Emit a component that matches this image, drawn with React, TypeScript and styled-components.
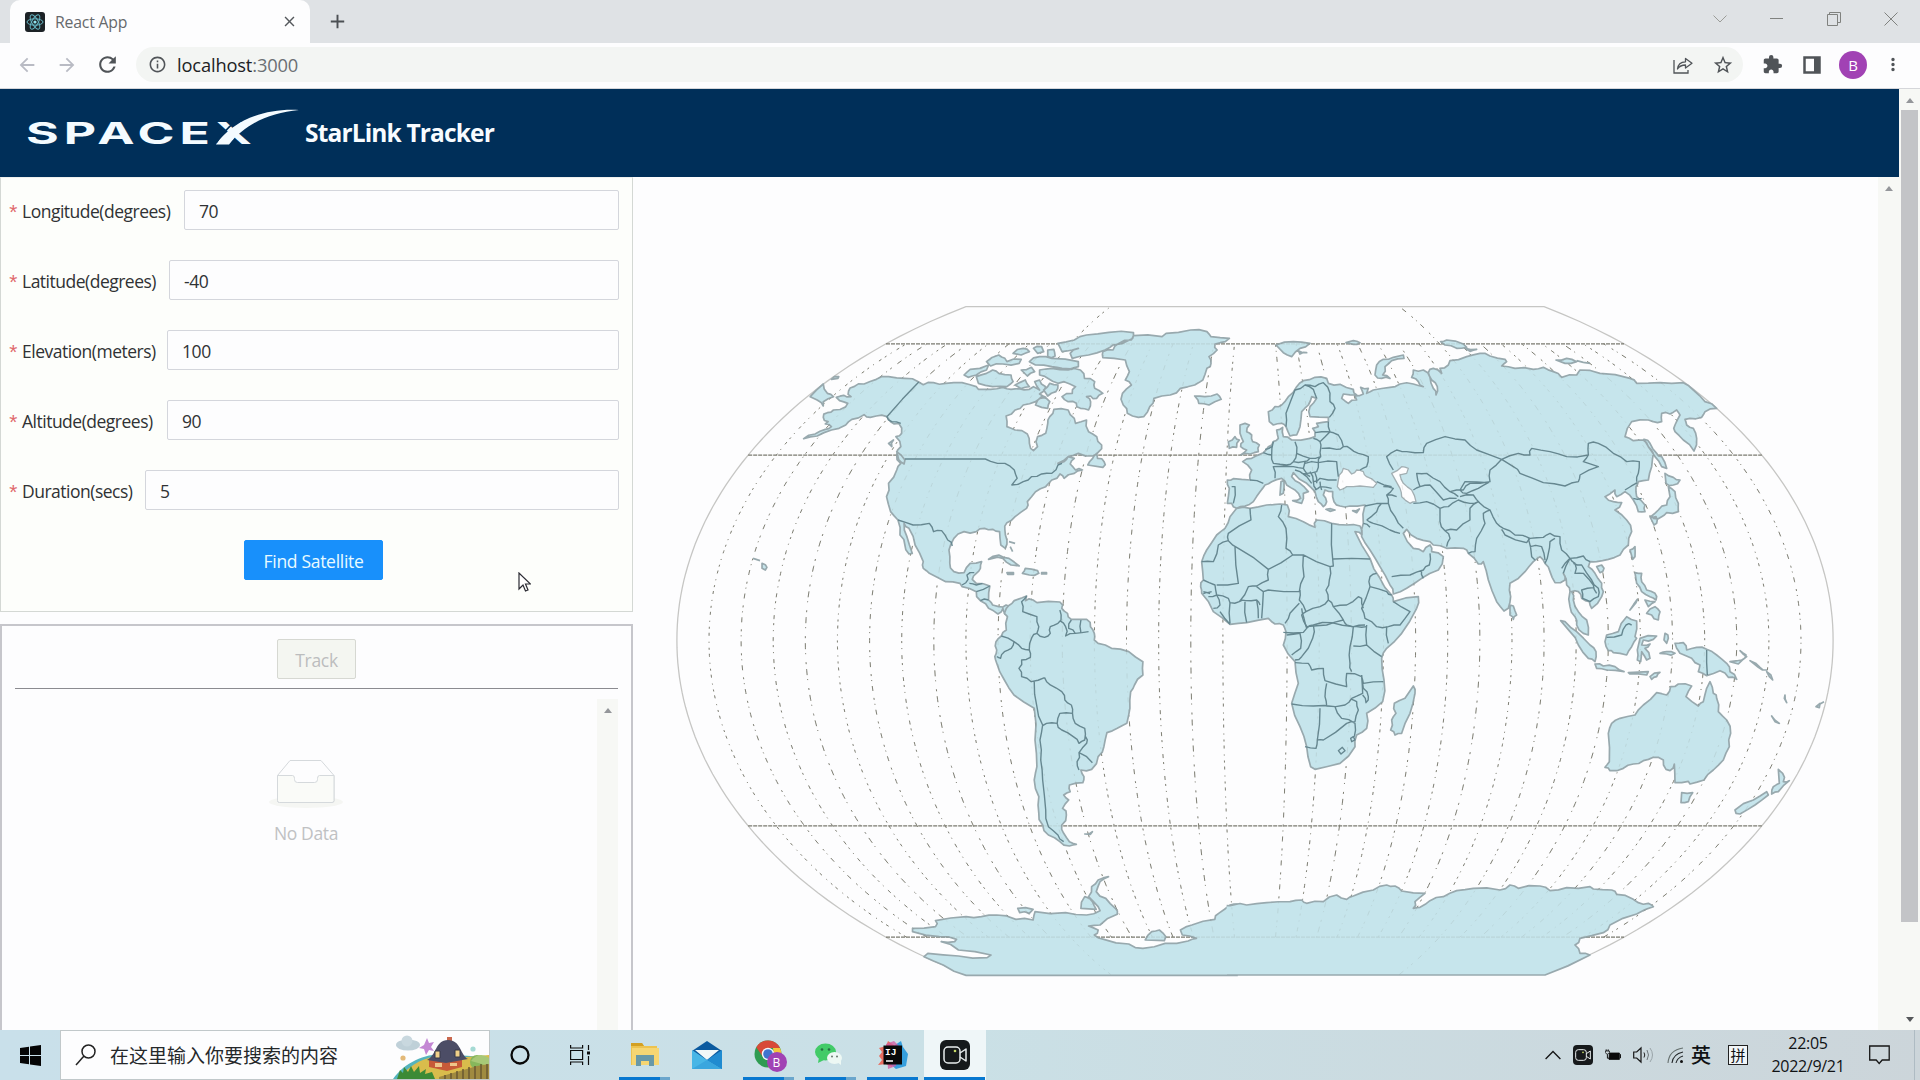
import React from "react";
import styled, { createGlobalStyle } from "styled-components";
import {
  MdArrowBack, MdArrowForward, MdRefresh, MdInfoOutline, MdStarBorder,
  MdExtension, MdMoreVert, MdClose, MdAdd,
} from "react-icons/md";

const GlobalStyle = createGlobalStyle`
  * { box-sizing: border-box; }
  body { margin: 0; overflow: hidden; background: #fdfdfe; }
`;

const ui = `"Open Sans", "Noto Sans", "Noto Sans CJK SC", sans-serif`;

const Screen = styled.div`
  width: 1920px; height: 1080px; display: flex; flex-direction: column;
  font-family: ${ui}; font-size: 17.5px; color: #303234; background: #fdfdfe;
  overflow: hidden; position: relative;
`;

/* ---------- browser chrome ---------- */
const TabStrip = styled.div`
  height: 43px; flex: none; display: flex; background: #dfe2e5; padding-left: 10px;
`;
const Tab = styled.div`
  width: 300px; height: 43px; background: #fdfdfe; border-radius: 10px 10px 0 0;
  display: flex; align-items: center; padding: 0 12px 0 15px;
`;
const Favicon = styled.svg`width: 20px; height: 20px; display: block;`;
const TabTitle = styled.span`
  flex: 1; padding-left: 10px; font-size: 15.8px; letter-spacing: -0.2px; color: #66696c;
`;
const NewTab = styled.div`
  width: 52px; display: flex; align-items: center; justify-content: center; color: #4c5054;
  padding-bottom: 1px; padding-left: 2px;
`;
const WindowButtons = styled.div`
  margin-left: auto; display: flex; align-items: center; padding: 0 1px 6px 0;
`;
const WindowButton = styled.div<{ $w: number }>`
  width: ${(p) => p.$w}px; display: flex; justify-content: center;
  svg { display: block; }
`;
const Toolbar = styled.div`
  height: 46px; flex: none; display: flex; align-items: center; background: #fdfdfe;
  border-bottom: 1px solid #d5d6da; padding: 0 0 2px 7px;
`;
const NavButton = styled.div<{ $off?: boolean; $w?: number }>`
  width: ${(p) => p.$w ?? 40}px; height: 40px; display: flex; align-items: center; justify-content: center;
  color: ${(p) => (p.$off ? "#b9bbc4" : "#505458")};
`;
const Omnibox = styled.div`
  width: 1607px; height: 35px; margin-left: 9px; border-radius: 18px; background: #f3f5f3;
  display: flex; align-items: center; padding: 0 0 0 12px; color: #505458;
`;
const Address = styled.span`
  flex: 1; padding-left: 10px; font-size: 18.3px; letter-spacing: -0.15px; color: #202124;
  span { color: #6b6f74; }
`;
const Avatar = styled.div<{ $size: number; $font: number }>`
  width: ${(p) => p.$size}px; height: ${(p) => p.$size}px; border-radius: 50%; background: #a142b4;
  color: #fff; display: flex; align-items: center; justify-content: center; font-size: ${(p) => p.$font}px;
`;

/* ---------- page ---------- */
const Page = styled.div`height: 941px; flex: none; display: flex; overflow: hidden;`;
const Document = styled.div`width: 1899px; display: flex; flex-direction: column;`;
const Header = styled.header`
  height: 88px; flex: none; background: #002f59; display: flex; padding: 20px 0 0 26px; color: #f8fcff;
`;
const Title = styled.h1`
  margin: 4px 0 0 5px; font-size: 24.5px; line-height: 40px; font-weight: 700; letter-spacing: -0.85px;
`;
const Columns = styled.div`flex: 1; display: flex; min-height: 0;`;
const Left = styled.div`width: 633px; display: flex; flex-direction: column;`;
const FormPanel = styled.form`
  height: 435px; flex: none; border: 1px solid #d4d8d4; border-top-color: #eef0ee; background: #fdfefb;
  padding: 12px 13px 0 7px; display: flex; flex-direction: column;
`;
const FieldRow = styled.div`height: 40px; margin-bottom: 30px; display: flex; flex: none;`;
const Label = styled.label<{ $w: number }>`
  width: ${(p) => p.$w}px; flex: none; display: flex; align-items: center; white-space: nowrap;
  letter-spacing: -0.5px; padding-top: 2px;
  &::before {
    content: "*"; color: #e0696c; width: 15px; margin-left: -1px; font-family: "Liberation Mono", monospace;
    letter-spacing: 0; font-size: 21px; padding-top: 7px; line-height: 24px;
  }
`;
const Field = styled.input`
  flex: 1; min-width: 0; border: 1px solid #d4d6dc; border-radius: 2px; background: #fdfdfe;
  padding: 2px 14px 0; font: inherit; color: inherit; letter-spacing: -0.4px; outline: none;
`;
const Button = styled.button<{ $w: number; $muted?: boolean }>`
  width: ${(p) => p.$w}px; height: 40px; border-radius: 2px; font: inherit; letter-spacing: -0.3px; padding: 1px 0 0;
  align-self: center; white-space: nowrap;
  background: ${(p) => (p.$muted ? "#f4f6f1" : "#1890fb")};
  color: ${(p) => (p.$muted ? "#bcbdbe" : "#e9fbff")};
  border: 1px solid ${(p) => (p.$muted ? "#d6d8d2" : "#1890fb")};
`;
const ListPanel = styled.section`
  flex: 1; margin-top: 12px; border: 2px solid #c6c6cb; border-bottom: 0; padding: 13px 13px 0;
  display: flex; flex-direction: column;
`;
const Rule = styled.div`height: 1px; background: #8b8b90; margin-top: 9px; flex: none;`;
const ListScroll = styled.div`flex: 1; margin-top: 10px; display: flex;`;
const Empty = styled.div`
  flex: 1; display: flex; flex-direction: column; align-items: center; padding-top: 60px; color: #c0c1c3;
  svg { display: block; }
  span { margin-top: 12px; letter-spacing: -0.35px; }
`;
const Track = styled.div<{ $top?: number }>`
  width: 21px; flex: none; background: #f7f8f5; display: flex; flex-direction: column; align-items: center;
  padding: ${(p) => p.$top ?? 9}px 0 8px;
`;
const Thumb = styled.div`width: 17px; height: 812px; margin-top: 7px; background: #c3c4c7;`;
const Arrow = styled.div<{ $down?: boolean }>`
  width: 0; height: 0; border: 4.5px solid transparent; border-top-width: ${(p) => (p.$down ? 5 : 0)}px;
  border-bottom-width: ${(p) => (p.$down ? 0 : 5)}px; margin-top: ${(p) => (p.$down ? "auto" : "0")};
  border-${(p) => (p.$down ? "top" : "bottom")}-color: ${(p) => (p.$down ? "#55575a" : "#94969a")};
`;
const MapPanel = styled.main`flex: 1; display: flex; min-width: 0;`;
const MapSvg = styled.svg`width: 1245px; height: 853px; display: block; flex: none;`;
const Pointer = styled.svg`position: absolute; left: 518px; top: 572px; width: 13px; height: 20px;`;

/* ---------- taskbar ---------- */
const Taskbar = styled.div`
  height: 50px; flex: none; display: flex; background: linear-gradient(90deg, #c9e0ea, #cae0e6 50%, #ccd5da);
  color: #101214;
`;
const StartButton = styled.div`width: 60px; display: flex; align-items: center; justify-content: center;`;
const SearchBox = styled.div`
  width: 430px; border: 1px solid #c1c8ca; background: #fdfdfe; display: flex; align-items: center; padding-left: 14px;
  overflow: hidden;
`;
const SearchText = styled.span`
  flex: 1; padding: 0 0 2px 13px; font-family: "Noto Sans CJK SC", sans-serif; font-size: 19px; color: #25282a;
  white-space: nowrap;
`;
const SystemItems = styled.div`display: flex; width: 123.5px;`;
const TaskItem = styled.div<{ $w: number; $bar?: number; $active?: boolean; $tail?: boolean }>`
  width: ${(p) => p.$w}px; flex: none; display: flex; flex-direction: column; align-items: center;
  background: ${(p) => (p.$active ? "#eff6f8" : "transparent")};
  &::after {
    content: ""; width: ${(p) => p.$bar ?? 0}px; height: 3px;
    background: ${(p) => (p.$tail ? "linear-gradient(90deg, #0878d0 80%, #6ba6cc 80%)" : "#0878d0")};
  }
`;
const TaskIcon = styled.div`
  height: 47px; padding-top: 3px; display: flex; align-items: center; position: relative;
  svg { display: block; }
`;
const Badge = styled.div`position: absolute; left: 13px; top: 22px;`;
const Tray = styled.div`margin-left: auto; display: flex; align-items: center; width: 375px;`;
const TrayItem = styled.div<{ $w: number }>`
  width: ${(p) => p.$w}px; flex: none; display: flex; justify-content: center; font-size: 20px;
  font-family: "Noto Sans CJK SC", sans-serif; line-height: 24px; font-weight: 500;
  svg { display: block; }
`;
const Ime = styled.span`
  width: 20px; height: 20px; border: 1px solid #222; background: #f2f6f8; font-size: 15px; line-height: 17px;
  text-align: center; font-weight: 400;
`;
const Clock = styled.div`
  width: 98px; flex: none; text-align: center; font-size: 16px; line-height: 23px; letter-spacing: -0.3px;
`;
const ShowDesktop = styled.div`margin-left: auto; width: 6px; height: 50px; border-left: 1px solid #aebbc3;`;

/* ---------- map ---------- */
const S = 212.5;
const CX = 1255;
const CY = 640.5;
const project = (lon: number, lat: number) => {
  const l = (lon * Math.PI) / 180;
  const f = (lat * Math.PI) / 180;
  const x = ((3 * l) / (2 * Math.PI)) * Math.sqrt((Math.PI * Math.PI) / 3 - f * f);
  return `${(CX + x * S).toFixed(1)} ${(CY - f * S).toFixed(1)}`;
};
const meridian = (lon: number, top: number) => {
  const pts: string[] = [];
  for (let lat = -top; lat <= top; lat += 2) pts.push(project(lon, lat));
  return "M" + pts.join("L");
};
const lons: number[] = [];
for (let l = -170; l <= 170; l += 10) if (l !== 0) lons.push(l);
const outline = meridian(-180, 90) + "L" + meridian(180, 90).slice(1).split("L").reverse().join("L") + "Z";
const dashes = ["3 4 2 5 1 6", "5 5 1 4 2 7", "2 4 4 6 1 5", "1 4 6 5 2 8"];

const view = {
  america: "translate(660 290) scale(.40816 .33333)",
  southWest: "translate(660 580) scale(.38265 .33333)",
  eurasia: "translate(1200 290) scale(.33333)",
  south: "translate(1180 560) scale(.33333)",
  oceania: "translate(1500 560) scale(.33333)",
};
type Region = { at: string; land: string; water?: string; border?: string };
const regions: Region[] = [
  {
    at: view.america,
    land: `M556,380 530,378 515,382 500,374 470,388 455,405 420,420 385,438 352,446 380,432 405,418 420,410 405,402 412,395 400,382 410,368 425,360 455,350 460,340 440,332 432,322 450,316 468,320 462,303 475,290 500,282 530,268 560,260 600,265 634,276 645,284 670,278 700,280 740,278 775,290 780,298 810,298 840,292 860,298 880,296 905,298 915,290 925,296 930,300 918,275 930,270 945,290 930,312 945,322 920,335 890,345 870,360 848,378 850,410 870,420 900,432 905,460 908,475 915,482 925,470 925,440 945,430 950,400 955,380 965,358 1000,360 1015,385 1018,400 1045,390 1050,425 1070,440 1082,465 1075,485 1060,498 1025,490 1000,500 975,520 990,515 1000,500 1015,505 1005,522 1018,540 1035,540 1015,550 990,565 980,552 960,570 945,590 920,605 900,635 898,655 870,680 850,698 845,720 850,750 846,775 835,765 832,725 815,718 795,715 775,725 745,725 720,745 708,780 710,820 720,845 745,848 760,820 788,815 785,835 775,850 765,868 775,880 808,888 805,930 815,945 830,950 848,945 860,952 845,972 840,955 828,972 805,955 785,932 775,905 740,890 735,880 700,875 660,850 645,835 645,815 625,765 610,715 598,700 605,740 618,790 610,792 600,765 588,735 583,690 565,665 555,620 560,580 580,540 590,520 580,495 590,470 578,440 592,430 585,400 565,395Z
M1160,137 1230,140 1240,130 1300,120 1340,125 1350,140 1395,145 1385,155 1360,162 1365,180 1345,200 1350,220 1340,235 1330,270 1310,285 1275,295 1250,315 1210,325 1200,350 1185,380 1172,382 1145,370 1135,345 1133,310 1155,285 1140,270 1150,245 1140,210 1085,203 1085,185 1110,180 1125,160 1155,150Z
M975,160 1015,150 1045,135 1100,127 1160,128 1160,137 1150,150 1110,165 1090,180 1050,195 1010,205 1005,190 1025,175 1010,180 985,185Z
M930,240 960,235 1000,240 1030,240 1040,265 1065,275 1065,295 1085,310 1070,325 1055,318 1045,320 1055,335 1050,360 1030,355 1020,340 1000,335 985,320 1010,310 1018,290 990,275 975,280 950,265 930,255Z
M775,260 800,250 815,240 830,250 860,255 865,275 850,290 815,290 780,280Z M745,255 760,238 805,225 800,240 775,255 755,262Z
M800,215 830,195 845,205 850,215 885,208 880,220 840,222 810,228Z M865,190 890,175 905,185 885,195Z M915,175 935,170 940,185 925,190Z
M905,215 930,200 960,205 1025,215 1025,230 985,235 960,230 920,225Z M950,180 965,178 968,198 950,200Z M885,240 910,232 918,245 900,258Z
M870,285 895,270 905,290 885,296Z M920,345 935,320 955,335 950,355 935,352Z M940,300 955,280 975,285 970,305 950,318Z
M1048,525 1060,505 1070,490 1072,505 1088,515 1085,532Z M580,485 600,510 598,522 585,510Z M560,460 572,450 568,470Z
M1310,318 1335,320 1365,312 1375,328 1345,345 1320,340 1318,330Z M368,320 400,282 410,310 425,320 400,335 400,348 385,330Z
M420,268 438,260 436,265Z M805,808 830,795 855,805 880,828 860,825 840,805 815,805Z M888,850 895,835 925,842 928,850 905,855Z
M850,848h16v5h-14Z M935,848h12v4h-12Z M855,755l15,5M858,770l6,15M228,805l17,7M250,820 262,832 258,840 250,835Z`,
    border: `M634,276 556,380 568,395 590,400M600,507 797,507 810,514 845,520 868,540 875,565 862,585 890,575 910,560 935,552 960,550 975,525 985,520M583,690 620,705 660,700 670,725 690,722 705,750 716,768M740,885 755,868 752,855 770,848M758,880 775,885 790,880M775,905 808,888M785,932 805,930`,
  },
  {
    at: view.southWest,
    land: `M905,85 920,70 935,58 958,48 955,62 975,60 985,68 1045,66 1050,85 1065,100 1075,118 1115,118 1125,140 1135,160 1135,180 1145,190 1180,205 1225,215 1262,245 1262,285 1240,315 1230,335 1228,385 1220,430 1195,445 1168,458 1160,500 1145,530 1128,568 1100,570 1108,590 1105,608 1070,615 1072,635 1055,645 1068,660 1052,685 1062,705 1050,735 1055,760 1070,785 1088,793 1070,798 1045,785 1015,765 1000,735 990,700 990,650 978,600 985,560 980,480 978,385 925,345 900,300 880,250 875,230 880,210 878,185 892,168 905,150 908,110 900,100Z
M1510,972 1490,975 1460,1000 1450,1018 1390,1035 1360,1050 1365,1065 1402,1075 1380,1083 1320,1090 1262,1105 1225,1092 1160,1078 1135,1065 1145,1050 1120,1038 1150,1035 1195,1003 1190,985 1165,955 1140,935 1150,905 1172,890 1145,900 1128,920 1120,950 1145,980 1150,992 1115,1005 1060,998 980,995 975,1020 930,1018 880,1005 840,1010 800,1010 720,1022 720,1040 660,1045 660,1055 730,1070 775,1078 770,1085 735,1085 780,1110 865,1125 855,1133 780,1128 700,1120 690,1130 740,1155 800,1186 1510,1186
M1100,985 1110,950 1130,965 1140,988Z M935,985 975,988 965,1000 940,998Z M1268,1080 1285,1055 1305,1050 1322,1070 1318,1082Z M1110,762 1130,755 1125,763Z`,
    border: `M958,48 945,65 948,95 985,110 990,140 985,160 972,172 965,210 968,232 945,240 938,265 945,290 970,305 1005,293M985,160 1005,172 1020,160 1020,140 1040,130 1048,120 1045,90M1045,122 1060,140 1060,168 1085,160 1120,155M1075,120 1068,145 1085,160M1100,120 1100,158M892,168 925,185 918,205 900,215 890,235 880,230M925,185 945,205 965,210M978,305 985,380 1000,435M1005,293 1020,315 1050,335 1058,360 1075,375 1078,400 1045,400 1038,430 1010,430 1000,437M1078,400 1085,430 1110,445 1110,480 1095,490 1080,470 1050,450 1038,430M1000,435 993,480 995,540 1000,600 1008,690 1015,740 1040,765 1055,785M1112,470 1115,490 1095,518 1130,548M1095,518 1090,545 1095,570`,
  },
  {
    at: view.eurasia,
    land: `M120,405 135,400 148,405 140,425 155,435 158,455 178,465 175,485 150,492 122,495 140,480 122,470 130,455 120,430Z M85,455 105,440 118,450 110,472 88,475Z
M228,165 280,155 330,160 300,175 275,200 250,188Z M295,182 320,188 300,192Z M438,158 460,152 480,158 460,163Z
M610,195 612,205 575,212 555,230 548,255 570,265 545,265 525,255 530,225 550,208 580,202Z M722,155 740,150 790,162 800,172 770,175 735,165Z M795,175 830,178 810,184Z M1068,210 1100,205 1130,215 1095,220Z M1130,212 1170,220
M205,365 225,350 245,345 265,320 290,290 310,272 345,262 380,265 385,280 420,283 460,298 470,315 430,312 425,325 445,340 470,330 465,318 490,312 482,292 505,295 500,310 520,300 570,292 600,282 640,282 670,290 655,275 635,262 640,240 670,240 690,262 700,295 708,315 712,290 695,270 685,248 700,235 725,250 720,235 745,225 750,212 800,200 840,190 870,198 915,208 920,215 905,228 945,235 1000,238 1030,232 1060,245 1085,262 1130,255 1140,240 1200,250 1290,265 1310,280 1380,278 1450,278 1480,300 1515,335 1550,355 1515,365 1505,382 1470,385 1455,388 1460,405 1480,415 1490,445 1482,483 1450,450 1425,425 1425,405 1440,375 1430,360 1410,372 1385,370 1385,395 1360,395 1345,390 1295,395 1275,440 1300,452 1330,450 1345,470 1360,490 1355,530 1345,570 1315,575 1308,590 1310,620 1335,645 1335,665 1315,665 1300,630 1275,605 1250,620 1245,600 1215,620 1240,635 1265,638 1245,660 1280,690 1295,725 1285,765 1260,795 1225,808 1190,815 1170,815 1165,830 1185,850 1205,880 1210,905 1205,920 1175,955 1168,935 1145,925 1135,905 1115,905 1120,930 1135,965 1160,990 1165,1035 1150,1030 1130,1005 1125,980 1110,950 1110,905 1100,885 1090,850 1095,870 1065,878 1050,845 1035,820 1020,800 1000,815 975,845 930,880 932,920 925,955 912,963 890,935 865,870 850,815 835,822 805,790 790,775 740,775 700,765 690,755 650,745 620,718 610,730 640,775 670,785 690,765 695,785 730,800 715,840 665,865 620,895 580,912 570,885 540,830 510,780 485,740 490,700 495,645 450,648 420,648 402,635 398,605 375,600 370,615 380,635 370,650 355,635 345,605 320,580 280,548 275,560 300,580 325,605 310,610 305,640 278,632 302,625 285,600 260,585 245,565 215,575 195,585 180,605 160,635 135,648 110,655 95,640 82,640 88,595 82,570 100,566 150,570 155,540 128,515 155,505 190,488 205,470 220,455 235,445 230,420 248,412 250,440 275,450 330,445 345,440 345,425 338,415 355,410 350,400 385,395 385,382 330,380 330,350 350,325 335,320 325,345 305,365 300,410 290,435 270,438 258,410 245,400 220,405 208,395Z
M110,655 150,655 200,645 240,642 262,645 265,680 310,695 345,712 350,690 395,700 440,705 480,708 486,735 465,725 510,805 540,865 575,915 580,935 655,920 650,955 605,1030 560,1075 545,1105 552,1170 548,1235 500,1270 500,1315 470,1335 465,1370 420,1420 345,1438 332,1430 320,1370 300,1310 275,1240 295,1180 285,1115 250,1065 258,1025 250,1005 225,1002 205,985 140,998 90,1003 40,965 5,910 2,890 10,870 5,815 20,780 50,735 75,715 90,680Z
M930,945 940,948 950,975 940,988 930,975Z M1190,830 1205,825 1212,835 1200,848Z M1290,780 1305,770 1305,800 1298,808Z M1332,448 1350,460 1370,490 1385,500 1400,535 1385,530 1365,500 1345,470Z
M1395,550 1420,562 1440,570 1420,585 1398,580Z M1405,590 1425,605 1435,640 1435,665 1400,668 1385,680 1360,685 1355,678 1375,660 1400,645 1410,620Z M1350,680 1368,680 1370,700 1362,705Z
M1305,848 1325,850 1325,875 1340,900 1365,910 1368,930 1350,920 1325,905 1310,880Z M1335,930 1365,935 1345,950Z M1340,970 1365,950 1380,965 1375,990 1355,975Z M1290,960 1312,928 1308,938Z
M243,575 252,572 250,610 240,615Z M378,658 405,660 390,664Z M458,662 478,657 470,668Z`,
    water: `M412,590 418,555 430,535 445,540 455,552 470,540 490,545 500,560 530,580 520,592 480,588 440,590 420,600Z M575,550 605,530 625,535 620,550 600,555 610,580 635,600 648,635 630,640 605,620 600,595Z`,
    border: `M150,655 153,690 85,730 85,752 115,775 205,838 278,795M85,752 55,765 40,815 5,815M105,770 115,880 50,885M245,645 235,680 258,715 258,775 278,795 310,795 390,830 400,828 395,700M400,807 510,807M205,838 205,870 170,888 145,890 118,935 90,938M310,795 312,860 298,905 205,900 190,905 170,890M390,830 388,870 378,900 385,930 360,950 318,965 298,930 300,900M385,930 400,950 440,945 475,920 485,925 490,955M530,850 510,860 510,890 485,955 495,985 530,1010 565,1010 600,1005 630,965 580,935M510,890 560,905 575,915M400,950 430,990 380,1005 320,1010 305,975 318,965M430,990 440,1005 470,1010 500,1010M10,870 45,885 50,915 25,920M10,905 35,905M10,911 30,911M50,915 85,925 90,938 90,1000M50,915 60,945 40,955M60,965 90,1003M118,935 137,932 170,930 180,945M135,935 140,998M170,930 175,985M190,905 185,985M298,940 270,970 255,1000
M258,410 258,370 285,300 315,285 345,290 370,278 390,310 390,335 405,355 388,382M315,285 340,298 350,325M385,395 390,425 360,455M345,428 385,425M340,445 360,455M385,425 415,435 430,470 410,478 365,475M430,470 450,475 475,490 505,500 500,530 480,540M285,455 290,490 330,505 362,500 362,475 360,455M220,455 215,495 220,520 260,525 280,515 290,490M190,488 215,495M225,565 220,530 280,530 310,535 315,515M280,515 310,515 330,505M315,520 355,518 362,500M355,518 410,515 415,560M310,535 320,550 350,545 355,518M330,545 340,575 360,565 410,570M300,545 335,580M345,600 360,590 395,595M340,575 350,600M150,570 190,580M95,590 105,590 100,640M305,550 330,560M285,540 300,545M345,548 350,580M360,575 365,600M215,470 195,478
M530,575 575,590M550,590 580,595 560,615 565,640 495,648M560,615 590,620M500,690 530,665 545,640M500,690 520,700 570,720 600,730M565,640 585,680 610,715M490,700 510,712M575,860 630,855 670,840 688,825 690,790M665,840 670,865
M580,540 560,500 590,480 620,485 670,488 680,460 735,440 795,450 830,480 905,508 870,540 870,575 810,580 790,600 750,605M660,590 650,550 680,550 720,575 750,605 775,620M640,600 660,590 690,585 730,630 770,625M720,655 745,650 775,630 810,640 835,635 810,655 810,690 770,720 735,722 720,695ZM735,722 750,745 740,770M640,640 680,635 720,655M795,575 865,578 835,595 800,610 780,600ZM780,620 820,615 840,640M835,635 870,660 850,670 855,700 830,745 825,785 805,790M870,660 890,700 910,715 945,735 990,745 1030,742 1050,730 1080,740 1085,780 1110,805 1150,798 1170,815M905,718 915,735 980,758 990,745M985,745 995,800 1005,810M990,770 1025,770 1035,810M1035,820 1045,790 1050,755 1065,745
M905,508 955,490 990,495 995,475 1050,485 1100,500 1165,495 1150,515 1195,530 1140,555 1135,575 1095,588 1030,578 960,550 940,530ZM1165,495 1165,460 1195,460 1240,490 1280,515 1318,515 1315,550 1310,575M1275,600 1312,578M1300,625 1325,625M1085,835 1110,805 1125,820 1125,850 1150,850 1180,885 1190,910M1110,805 1090,850M1120,820 1145,825 1175,870 1195,895 1195,920 1170,935 1148,925 1145,900 1180,893`,
  },
  {
    at: view.south,
    land: `M700,378 705,400 690,460 665,520 645,525 632,510 635,480 648,460 643,430 675,415Z
M140,1037 160,1035 200,1035 260,1028 330,1025 365,1020 380,1030 430,1025 470,1005 500,1018 520,1008 580,990 620,975 645,978 665,993 735,1000 705,1025 700,1045 720,1042 750,1022 790,1010 830,992 880,985 960,990 990,975 1015,985 1080,978 1110,992 1160,983 1230,980 1240,987 1295,990 1310,1003 1360,1018 1375,1028 1405,1030 1420,1040 1370,1062 1290,1095 1270,1118 1200,1135 1185,1155 1200,1180 1230,1185 1095,1245 140,1245`,
    border: `M310,217 370,217 380,205 400,195M365,145 372,175 380,205M320,225 360,220 362,265 335,285M400,195 398,235 365,290 345,300M345,308 385,310 395,330 430,325 435,362 500,380 500,340 545,350 550,370 610,365M400,195 455,188 520,200 555,195M520,200 510,260 510,310 515,335M520,258 560,255 605,290M620,200 625,250M560,195 560,255M545,350 548,400 515,415 495,435 440,438 435,410 440,370M545,345 550,385 565,410 558,428 548,405M335,432 400,438 465,440M420,445 412,540 408,565 375,560M412,540 430,540 500,490 525,485 535,450 530,425 515,418M465,440 485,475 525,490 523,530M475,572 487,562 495,572 483,582ZM512,535 520,530 525,540 515,545Z`,
  },
  {
    at: view.oceania,
    land: `M182,182 195,185 230,215 270,255 288,275 285,305 265,295 235,255 210,215Z M285,312 310,318 345,320 372,335 320,330 290,325Z M385,338 445,335 440,345 390,342Z M450,350 480,337 470,350 455,358Z
M320,225 355,215 380,170 410,183 405,230 410,235 395,260 380,285 340,278 325,272 315,245Z M420,235 470,228 460,238 430,240 425,255 450,252 435,265 450,295 440,300 425,275 422,305 412,300 412,270Z
M495,220 505,235 500,250 492,240Z M480,280 500,275 525,280 500,282Z M525,250 550,248 560,270 590,262 620,268 650,285 680,310 690,335 710,358 685,352 660,332 620,347 595,335 600,315 575,295 540,280 530,265Z
M690,305 725,300 738,285 720,272 740,290 715,312Z M750,302 780,322 800,330 775,322Z M800,335 818,360 808,350Z M855,405 860,428 853,415Z M815,468 838,490 825,485Z M948,440 960,430 958,443Z M960,432 972,425
M630,365 640,400 650,415 655,455 680,480 692,520 688,560 670,600 640,630 612,660 570,672 565,664 525,668 523,612 510,632 498,628 490,600 460,592 430,602 400,612 370,625 330,632 315,622 328,605 325,520 335,490 360,475 405,465 430,435 470,398 500,405 512,380 535,372 575,378 558,410 595,438 610,425 620,385Z
M545,698 578,698 565,725 543,728Z M835,628 848,640 850,665 868,662 835,695 815,702 820,680 838,670Z M705,750 760,720 800,695 805,705 765,735 720,762 708,760Z`,
    border: `M320,232 365,225 378,195 395,195M620,270 622,345`,
  },
];

/* Slightly irregular shoreline: each edge gets a small offset midpoint. */
const rough = (d: string, amount: number) =>
  d.replace(/(-?\d+),(-?\d+) (?=(-?\d+),(-?\d+))/g, (_m, a, b, c, e) => {
    const [x1, y1, x2, y2] = [+a, +b, +c, +e];
    const len = Math.hypot(x2 - x1, y2 - y1);
    if (len < 16 || len > 150) return `${x1},${y1} `;
    const k = (((x1 * 7 + y1 * 13) % 11) / 11 - 0.5) * amount;
    const mx = (x1 + x2) / 2 - ((y2 - y1) / len) * k;
    const my = (y1 + y2) / 2 + ((x2 - x1) / len) * k;
    return `${x1},${y1} ${mx.toFixed(1)},${my.toFixed(1)} `;
  });

const Graticule = ({ opacity }: { opacity: number }) => (
  <g fill="none" stroke="#6f6f62" strokeWidth="1" opacity={opacity}>
    {lons.map((l, i) => (
      <path key={l} d={meridian(l, Math.abs(l) === 90 ? 90 : 80)} strokeDasharray={dashes[i % 4]} />
    ))}
    {[80, 50, -50, -80].map((lat) => (
      <path key={lat} d={`M${project(-180, lat)}L${project(180, lat)}`} strokeDasharray="4 1" strokeWidth="1.3" />
    ))}
  </g>
);

const WorldMap = () => (
  <MapSvg viewBox="633 177 1245 853">
    <path d={outline} fill="none" stroke="#c6c6c4" strokeWidth="1.3" />
    <Graticule opacity={0.85} />
    <g strokeLinejoin="round">
      {regions.map((r) => (
        <g key={r.at} transform={r.at}>
          <path d={rough(r.land, 9)} fill="#c6e5ec" stroke="#98a9ae" strokeWidth="1.7" vectorEffect="non-scaling-stroke" />
          {r.water && (
            <path d={rough(r.water, 6)} fill="#fdfdfe" stroke="#a2afb3" strokeWidth="1.300" vectorEffect="non-scaling-stroke" />
          )}
        </g>
      ))}
      {regions.map((r) => (
        <g key={r.at} transform={r.at}>
          {r.border && (
            <path d={rough(r.border, 8)} fill="none" stroke="#668790" strokeWidth="1.400" vectorEffect="non-scaling-stroke" />
          )}
        </g>
      ))}
    </g>
    <Graticule opacity={0.13} />
  </MapSvg>
);

const Logo = () => (
  <svg width="274" height="54" viewBox="0 0 274 54">
    <text x="0" y="35.200" textLength="231" lengthAdjust="spacingAndGlyphs" fill="#f4fbff"
      fontFamily="Inter, 'Open Sans', sans-serif" fontWeight="700" fontSize="29.500" letterSpacing="3">SPACEX</text>
    <path d="M190 35.500C206 12 238 -1 273 1C244 4 220 14 203 35.500Z" fill="#f4fbff" />
    <path d="M190 34C198 21 208 12 222 6" stroke="#002f59" strokeWidth="1.500" fill="none" />
  </svg>
);

const Camera = ({ size }: { size: number }) => (
  <svg width={size} height={size} viewBox="0 0 30 30">
    <rect width="30" height="30" rx="6" fill="#16191b" />
    <rect x="4" y="7" width="16" height="16" rx="4" fill="none" stroke="#e9edee" strokeWidth="1.500" />
    <path d="M20 13l6-4v12l-6-4" fill="none" stroke="#e9edee" strokeWidth="1.500" strokeLinejoin="round" />
    <circle cx="15" cy="11" r="1.300" fill="#c8da68" />
  </svg>
);

const SearchArt = () => (
  <svg width="96" height="48" viewBox="0 0 96 48">
    <path d="M0 48C14 28 40 20 60 24L96 26V48Z" fill="#55b4bc" />
    <path d="M5 48C22 27 44 22 62 27L96 24V48Z" fill="#d9bc4c" />
    <path d="M4 48l3-9 3 3 1-6 4 5 3-6 3 6 5-6 1 7 6-4-1 5 7-2 3 7Z" fill="#3c8a35" />
    <ellipse cx="15" cy="14" rx="12" ry="5.500" fill="#bfd0d8" /><circle cx="14" cy="10" r="5.500" fill="#c9d8df" />
    <path d="M34 7l2 5 5-1-3 5 3 4-5-1-3 5-2-6-5-1 5-3Z" fill="#c487d4" />
    <circle cx="10" cy="27" r="2.600" fill="#e3b978" /><circle cx="80" cy="18" r="2.600" fill="#a5dad4" />
    <circle cx="84" cy="31" r="7" fill="#87b75c" /><path d="M78 30q8-10 18-3v8Z" fill="#a8c877" />
    <rect x="54" y="6" width="5" height="9" fill="#c9684e" />
    <path d="M36 28h33v8l-15 4-18-4Z" fill="#c75a38" />
    <path d="M34 29C44 24 42 9 55 9c13 0 12 15 20 19l-22 4Z" fill="#4c4d66" />
    <path d="M42 20h5v7h-5zM62 19h5v7h-5z" fill="#f0d089" stroke="#373848" />
    <path d="M42 32h7v4h-7zM57 32h7v3h-7z" fill="#eec58a" />
    <path d="M46 46l38-11 12-2v15H46Z" fill="#a08a40" /><path d="M52 44v4M58 42v6M64 40v8M70 38v10M76 36v12M82 35v13M88 33v15M94 33v15" stroke="#695830" strokeWidth="1.500" />
  </svg>
);

const fields: [string, string, number][] = [
  ["Longitude(degrees)", "70", 176],
  ["Latitude(degrees)", "-40", 161],
  ["Elevation(meters)", "100", 159],
  ["Altitude(degrees)", "90", 159],
  ["Duration(secs)", "5", 137],
];

export default function App() {
  return (
    <Screen>
      <GlobalStyle />
      <TabStrip>
        <Tab>
          <Favicon viewBox="0 0 20 20">
            <rect width="20" height="20" rx="3" fill="#1c2226" />
            <g fill="none" stroke="#65b6c4" strokeWidth="1">
              <ellipse cx="10" cy="10" rx="8" ry="3.200" />
              <ellipse cx="10" cy="10" rx="8" ry="3.200" transform="rotate(60 10 10)" />
              <ellipse cx="10" cy="10" rx="8" ry="3.200" transform="rotate(120 10 10)" />
            </g>
            <circle cx="10" cy="10" r="1.600" fill="#8fe3ee" />
          </Favicon>
          <TabTitle>React App</TabTitle>
          <MdClose size={17} color="#54585c" />
        </Tab>
        <NewTab><MdAdd size={23} /></NewTab>
        <WindowButtons>
          <WindowButton $w={57}>
            <svg width="14" height="8" viewBox="0 0 14 8"><path d="M.5 .5 7 7 13.500 .5" fill="none" stroke="#9b9c98" /></svg>
          </WindowButton>
          <WindowButton $w={57}>
            <svg width="13" height="13"><path d="M0 6.500H13" stroke="#80827f" /></svg>
          </WindowButton>
          <WindowButton $w={57}>
            <svg width="14" height="14"><path d="M.5 2.500h10v11H.5zM2.500 2.500V.5h11v10h-3" fill="none" stroke="#80827f" /></svg>
          </WindowButton>
          <WindowButton $w={57}>
            <svg width="14" height="14"><path d="M.5 .5l13 13M13.500 .5l-13 13" stroke="#80827f" /></svg>
          </WindowButton>
        </WindowButtons>
      </TabStrip>
      <Toolbar>
        <NavButton $off><MdArrowBack size={22} /></NavButton>
        <NavButton $off><MdArrowForward size={22} /></NavButton>
        <NavButton><MdRefresh size={25} /></NavButton>
        <Omnibox>
          <MdInfoOutline size={19} />
          <Address>localhost<span>:3000</span></Address>
          <NavButton>
            <svg width="20" height="18" viewBox="0 0 20 18" fill="none" stroke="#505458" strokeWidth="1.300">
              <path d="M1 4v13h14v-3" /><path d="M4.500 13c.5-5 3.500-7 8-7.200V2.500l6.500 4.700-6.500 4.800V9c-3.500 0-6 1-8 4Z" strokeLinejoin="round" />
            </svg>
          </NavButton>
          <NavButton><MdStarBorder size={22} /></NavButton>
        </Omnibox>
        <NavButton $w={58}><MdExtension size={21} /></NavButton>
        <NavButton $w={22}>
          <svg width="18" height="18"><path d="M1.500 1.500h15v15h-15z" fill="none" stroke="#505458" strokeWidth="2.500" /><path d="M11 1h6v16h-6z" fill="#505458" /></svg>
        </NavButton>
        <NavButton $w={60}><Avatar $size={28} $font={15}>B</Avatar></NavButton>
        <NavButton $w={20}><MdMoreVert size={23} /></NavButton>
      </Toolbar>

      <Page>
        <Document>
          <Header>
            <Logo />
            <Title>StarLink Tracker</Title>
          </Header>
          <Columns>
            <Left>
              <FormPanel>
                {fields.map(([label, value, w]) => (
                  <FieldRow key={label}>
                    <Label $w={w}>{label}</Label>
                    <Field defaultValue={value} />
                  </FieldRow>
                ))}
                <Button type="button" $w={139}>Find Satellite</Button>
              </FormPanel>
              <ListPanel>
                <Button type="button" $w={79} $muted>Track</Button>
                <Rule />
                <ListScroll>
                  <Empty>
                    <svg width="76" height="50" viewBox="0 0 76 50">
                      <ellipse cx="38" cy="43" rx="37" ry="6" fill="#f5f6f3" />
                      <path d="M9.500 16.500 22 1.500h31l13 15v25q0 2-2 2H11.500q-2 0-2-2z" fill="#fdfdfe" stroke="#d5d9dc" />
                      <path d="M9.500 16.500h15q2 0 2 3v1q0 3 3 3h17q3 0 3-3v-1q0-3 2-3h14.500v25q0 2-2 2H11.500q-2 0-2-2z" fill="#fafbf8" stroke="#d5d9dc" />
                    </svg>
                    <span>No Data</span>
                  </Empty>
                  <Track><Arrow /></Track>
                </ListScroll>
              </ListPanel>
            </Left>
            <MapPanel>
              <WorldMap />
              <Track><Arrow /></Track>
            </MapPanel>
          </Columns>
        </Document>
        <Track><Arrow /><Thumb /><Arrow $down /></Track>
      </Page>

      <Taskbar>
        <StartButton>
          <svg width="21" height="21" viewBox="0 0 21 21"><path d="M0 3l9-1.300V10H0zM10 1.500 21 0v10H10zM0 11h9v8.300L0 18zM10 11h11v10l-11-1.500z" fill="#050505" /></svg>
        </StartButton>
        <SearchBox>
          <svg width="22" height="22"><circle cx="13.500" cy="7.500" r="6.500" fill="none" stroke="#222" strokeWidth="1.500" /><path d="M9 12 1 21" stroke="#222" strokeWidth="1.500" /></svg>
          <SearchText>在这里输入你要搜索的内容</SearchText>
          <SearchArt />
        </SearchBox>
        <SystemItems>
          <TaskItem $w={60}>
            <TaskIcon><svg width="20" height="20"><circle cx="10" cy="10" r="8.500" fill="none" stroke="#080808" strokeWidth="2.300" /></svg></TaskIcon>
          </TaskItem>
          <TaskItem $w={60}>
            <TaskIcon>
              <svg width="20" height="20" viewBox="0 0 20 20" fill="none" stroke="#0c0c0c" strokeWidth="1.200">
                <path d="M.6 0v3h12V0M.6 20v-3h12v3M.6 5.500h12v9H.6zM18.500 0v5M18.500 11v9" /><path d="M17 6.500h3v3h-3z" fill="#0c0c0c" stroke="none" />
              </svg>
            </TaskIcon>
          </TaskItem>
        </SystemItems>
        <TaskItem $w={62} $bar={51} $tail>
          <TaskIcon>
            <svg width="28" height="26" viewBox="0 0 28 26">
              <path d="M0 1h11l2 3h13v19H0z" fill="#edc34f" /><path d="M0 1h11l2 3H0z" fill="#d3a024" /><path d="M1 6h27v17H1z" fill="#f6d673" />
              <path d="M5 24V13h18v11h-5v-5h-8v5z" fill="#6999a7" />
            </svg>
          </TaskIcon>
        </TaskItem>
        <TaskItem $w={62}>
          <TaskIcon>
            <svg width="30" height="28" viewBox="0 0 30 28">
              <path d="M0 10 15 0l15 10v18H0z" fill="#0b5a9f" /><path d="M3 9h24L15 19z" fill="#f1f8f8" /><path d="M0 9l15 10 15 9H0z" fill="#48b6e6" /><path d="M30 9 15 19l15 9z" fill="#208bd0" /><path d="M15 19 0 28h30z" fill="#3aa6de" />
            </svg>
          </TaskIcon>
        </TaskItem>
        <TaskItem $w={62} $bar={51} $tail>
          <TaskIcon>
            <svg width="30" height="30" viewBox="0 0 30 30">
              <circle cx="14" cy="14" r="13.500" fill="#2f9c52" /><path d="M2.300 7.300A13.500 13.500 0 0 1 26 8H14l-5 9z" fill="#d84a38" /><path d="M26 8a13.500 13.500 0 0 1-12 19.500L20 17l-1-9z" fill="#f5c73c" />
              <circle cx="14" cy="14" r="6.200" fill="#f5f8fa" /><circle cx="14" cy="14" r="4.800" fill="#3f74cf" />
            </svg>
            <Badge><Avatar $size={20} $font={12}>B</Avatar></Badge>
          </TaskIcon>
        </TaskItem>
        <TaskItem $w={62} $bar={51} $tail>
          <TaskIcon>
            <svg width="32" height="26" viewBox="2 2 32 26">
              <ellipse cx="12.500" cy="12" rx="10.500" ry="8.500" fill="#42cb68" /><path d="M6 17l-1 6 6-3z" fill="#42cb68" /><ellipse cx="21.500" cy="18" rx="7.500" ry="6" fill="#edf8f4" /><path d="M24 22l4 3v-5z" fill="#edf8f4" />
              <g fill="#266e42"><circle cx="9" cy="9.500" r="1.300" /><circle cx="16" cy="9.500" r="1.300" /></g><g fill="#69766f"><circle cx="19" cy="16.500" r="1" /><circle cx="24" cy="16.500" r="1" /></g>
            </svg>
          </TaskIcon>
        </TaskItem>
        <TaskItem $w={62} $bar={51}>
          <TaskIcon>
            <svg width="30" height="30" viewBox="0 0 30 30">
              <path d="M1 8l7-2 2-5 7 5-3 21-6-3-8 1 4-5-3-4 3-4z" fill="#e86d60" /><path d="M17 5l6-4 2 6 5 7-2 12-10 3-6-5z" fill="#369fdd" /><path d="M8 4 16 1l5 5-3 20-8 3z" fill="#d35aa0" opacity=".75" />
              <rect x="5.500" y="5.500" width="18.500" height="19" fill="#090909" />
              <text x="7" y="15" fill="#fff" fontSize="9.500" fontWeight="700" fontFamily="Liberation Mono, monospace">IJ</text><path d="M8 21h7" stroke="#fff" strokeWidth="1.500" />
            </svg>
          </TaskIcon>
        </TaskItem>
        <TaskItem $w={62} $bar={61} $active><TaskIcon><Camera size={30} /></TaskIcon></TaskItem>

        <Tray>
          <TrayItem $w={16}><svg width="16" height="10"><path d="M.6 9 8 1.500 15.400 9" fill="none" stroke="#151515" strokeWidth="1.300" /></svg></TrayItem>
          <TrayItem $w={44}><Camera size={20} /></TrayItem>
          <TrayItem $w={16}>
            <svg width="20" height="14" viewBox="0 0 20 14"><path d="M5.500 4.500h12.500v8H5z" fill="#0a0a0a" stroke="#0a0a0a" /><path d="M19.400 6v5M1.500 0v2M4 0v2M3 6v5h2" stroke="#0a0a0a" strokeWidth="1.200" fill="none" /><path d="M.5 2h5v2q-2.500 4-5 0z" fill="#cdd8dd" stroke="#0a0a0a" /></svg>
          </TrayItem>
          <TrayItem $w={44}>
            <svg width="21" height="18" viewBox="0 0 21 18" fill="none"><path d="M.7 6h3L8 2v14l-4.300-4h-3z" stroke="#171717" strokeWidth="1.200" /><path d="M11 6.500q1.500 2.500 0 5" stroke="#222" /><path d="M14 4q3 5 0 10" stroke="#70787c" /><path d="M17 2q5 7 0 14" stroke="#9aa4a9" /></svg>
          </TrayItem>
          <TrayItem $w={20}>
            <svg width="17" height="17" viewBox="0 0 17 17" fill="none" stroke="#24282a" strokeWidth="1.100"><path d="M1 16Q2 3 16 1" stroke="#66706f" /><path d="M5 16q1-9 11-11M9 16q1-5 7-7" /><circle cx="14.500" cy="14.500" r="1.500" fill="#111" stroke="none" /></svg>
          </TrayItem>
          <TrayItem $w={32}>英</TrayItem>
          <TrayItem $w={42}><Ime>拼</Ime></TrayItem>
          <Clock>22:05<br />2022/9/21</Clock>
          <TrayItem $w={44}>
            <svg width="21" height="20" viewBox="0 0 21 20"><path d="M.7 1h19.500v14h-7l-3 3.500-3-3.500H.7z" fill="none" stroke="#161616" strokeWidth="1.300" /></svg>
          </TrayItem>
          <ShowDesktop />
        </Tray>
      </Taskbar>

      <Pointer viewBox="0 0 13 20"><path d="M1 1v16l4-4 2.500 6 2.500-1-2.500-6H12.500z" fill="#fff" stroke="#2b2b33" strokeWidth="1.200" /></Pointer>
    </Screen>
  );
}
